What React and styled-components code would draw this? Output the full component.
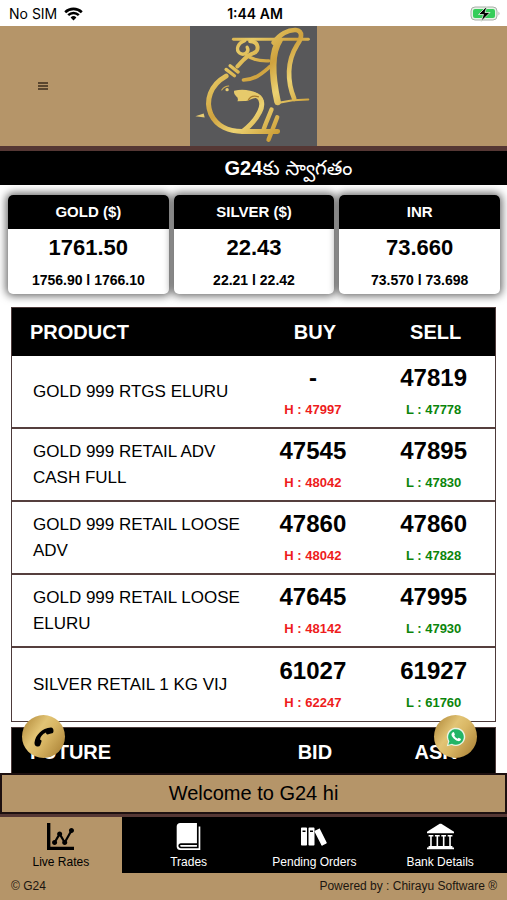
import React from "react";
import styled, { createGlobalStyle } from "styled-components";
import { ImStatsDots, ImBook, ImBooks, ImLibrary } from "react-icons/im";

const GlobalStyle = createGlobalStyle`
  * {
    box-sizing: border-box;
  }

  body {
    margin: 0;
    background: #fff;
    color: #000;
    font-family: "Liberation Sans", Arial, sans-serif;
  }
`;

const Screen = styled.div`
  display: flex;
  flex-direction: column;
  height: 100vh;
`;

const StatusBar = styled.div`
  display: grid;
  grid-template-columns: 1fr auto 1fr;
  align-items: center;
  flex: none;
  height: 26px;
  padding: 2px 6px 0 9px;
  font-family: Inter, sans-serif;
  font-size: 14px;
  line-height: 20px;
`;

const Carrier = styled.span`
  display: flex;
  align-items: center;
  gap: 7px;
`;

const Clock = styled.span`
  font-weight: 600;
`;

const BatteryIcon = styled.svg`
  justify-self: end;
`;

const Header = styled.header`
  display: grid;
  grid-template-columns: 1fr auto 1fr;
  align-items: center;
  flex: none;
  background: #b59569;
  border-bottom: 5px solid #553734;
`;

const MenuButton = styled.button`
  justify-self: start;
  display: flex;
  margin-left: 28px;
  padding: 10px;
  border: 0;
  background: none;
`;

const Logo = styled.svg`
  display: block;
  width: 127px;
  height: 120px;
  background: #58585a;
`;

const Greeting = styled.div`
  flex: none;
  height: 34px;
  padding-left: 70px;
  background: #000;
  color: #fff;
  font-family: "Liberation Sans", "Noto Sans Telugu", "Noto Sans", sans-serif;
  font-size: 20px;
  line-height: 35px;
  text-align: center;
`;

const Content = styled.main`
  flex: 1;
  min-height: 0;
  overflow-y: auto;
  scrollbar-width: none;
`;

const Cards = styled.section`
  display: grid;
  grid-template-columns: repeat(3, 1fr);
  gap: 5px;
  padding: 10px 7px 13px 8px;
`;

const Card = styled.article`
  overflow: hidden;
  border-radius: 5px;
  background: #fff;
  box-shadow: 0 0 8px 2px rgba(0, 0, 0, 0.6);
  font-weight: bold;
  text-align: center;
`;

const CardTitle = styled.h2`
  margin: 0;
  background: #000;
  color: #fff;
  font-size: 15px;
  line-height: 34px;
`;

const CardPrice = styled.div`
  font-size: 22px;
  line-height: 38px;
`;

const CardRange = styled.div`
  padding-bottom: 1px;
  font-size: 14px;
  line-height: 26px;
`;

const RateTable = styled.table`
  width: calc(100% - 22px);
  margin: 0 11px 5px;
  border: 1px solid #4d3a3a;
  border-collapse: separate;
  border-spacing: 0;
  table-layout: fixed;
`;

const HeadCell = styled.th`
  width: ${props => (props.$wide ? "50%" : "25%")};
  height: 48px;
  padding: 0 0 0 ${props => (props.$wide ? "18px" : "2px")};
  background: #000;
  color: #fff;
  font-size: 20px;
  text-align: ${props => (props.$wide ? "left" : "center")};
`;

const Row = styled.tr`
  &:not(:last-child) > * {
    border-bottom: 2px solid #553f3d;
  }
`;

const NameCell = styled.th`
  height: 73px;
  padding: 0 8px 0 21px;
  font-size: 17px;
  font-weight: normal;
  line-height: 26px;
  text-align: left;
`;

const RateCell = styled.td`
  padding: 0 2px 2px 0;
  font-weight: bold;
  text-align: center;
`;

const Rate = styled.div`
  font-size: 24px;
  line-height: 32px;
`;

const Limit = styled.div`
  padding-top: 6px;
  color: ${props => (props.$low ? "#0b850b" : "#ee1c1c")};
  font-size: 13px;
  line-height: 20px;
`;

const Bottom = styled.div`
  position: relative;
  flex: none;
`;

const RoundLink = styled.a`
  position: absolute;
  bottom: calc(100% + 15px);
  ${props => props.$side}: ${props => (props.$side === "left" ? "22px" : "30px")};
  display: flex;
  align-items: center;
  justify-content: center;
  width: 43px;
  height: 43px;
  border-radius: 50%;
  background: linear-gradient(125deg, #b28a3b 5%, #e2c475 38%, #d9b765 55%, #a98035 95%);
`;

const Ticker = styled.div`
  height: 41px;
  border: 2px solid #1d1010;
  background: #b59569;
  font-size: 20px;
  line-height: 36px;
  text-align: center;
`;

const Nav = styled.nav`
  display: grid;
  grid-template-columns: repeat(4, 1fr);
  padding-right: 4px;
  border-top: 3px solid #553734;
  background: #000;
`;

const NavLink = styled.a`
  display: flex;
  flex-direction: column;
  align-items: center;
  gap: 4px;
  height: 56px;
  margin-right: ${props => (props.$active ? "4px" : "0")};
  padding-top: 6px;
  background: ${props => (props.$active ? "#b59569" : "#000")};
  color: ${props => (props.$active ? "#000" : "#fff")};
  font-size: 12px;
  line-height: 16px;
  text-decoration: none;
`;

const Footer = styled.footer`
  display: flex;
  justify-content: space-between;
  padding: 0 10px 0 11px;
  background: #b59569;
  color: #1c1510;
  font-size: 12px;
  line-height: 27px;
`;

const cards = [
  { title: "GOLD ($)", price: "1761.50", low: "1756.90", high: "1766.10" },
  { title: "SILVER ($)", price: "22.43", low: "22.21", high: "22.42" },
  { title: "INR", price: "73.660", low: "73.570", high: "73.698" }
];

const products = [
  { name: "GOLD 999 RTGS ELURU", buy: "-", sell: "47819", high: "47997", low: "47778" },
  { name: "GOLD 999 RETAIL ADV CASH FULL", buy: "47545", sell: "47895", high: "48042", low: "47830" },
  { name: "GOLD 999 RETAIL LOOSE ADV", buy: "47860", sell: "47860", high: "48042", low: "47828" },
  { name: "GOLD 999 RETAIL LOOSE ELURU", buy: "47645", sell: "47995", high: "48142", low: "47930" },
  { name: "SILVER RETAIL 1 KG VIJ", buy: "61027", sell: "61927", high: "62247", low: "61760" }
];

const links = [
  { label: "Live Rates", Icon: ImStatsDots, active: true },
  { label: "Trades", Icon: ImBook },
  { label: "Pending Orders", Icon: ImBooks },
  { label: "Bank Details", Icon: ImLibrary }
];

const WifiIcon = () => (
  <svg width="19" height="14" viewBox="0 0 19 14" fill="none" stroke="#000">
    <path d="M1.2 5.2a12 12 0 0 1 16.6 0" strokeWidth="2.6" />
    <path d="M4.2 8.2a7.6 7.6 0 0 1 10.6 0" strokeWidth="2.5" />
    <path d="M9.5 13.6 6.6 10.5a4.2 4.2 0 0 1 5.8 0z" fill="#000" stroke="none" />
  </svg>
);

const Battery = () => (
  <BatteryIcon width="31" height="16" viewBox="0 0 31 16">
    <rect x="1" y="1" width="26" height="13" rx="4" fill="#e4f3e4" stroke="#a9aea9" />
    <rect x="3" y="3" width="22" height="9" rx="2" fill="#35cd59" />
    <path d="M28.5 5.5q2 2 0 4z" fill="#a9aea9" />
    <path d="M17 0 8.500 8.500h5L11 15.500l9-9h-5z" fill="#000" stroke="#e4f3e4" strokeWidth="0.8" />
  </BatteryIcon>
);

const BrandLogo = () => (
  <Logo viewBox="32 18 380 362" preserveAspectRatio="none" role="img" aria-label="G24">
    <defs>
      <linearGradient id="gold" gradientUnits="userSpaceOnUse" x1="80" y1="60" x2="330" y2="330">
        <stop offset="0" stopColor="#cfa03c" />
        <stop offset="0.25" stopColor="#e6c965" />
        <stop offset="0.5" stopColor="#cfa23e" />
        <stop offset="0.7" stopColor="#ecd272" />
        <stop offset="1" stopColor="#c8972f" />
      </linearGradient>
    </defs>
    <g fill="none" stroke="url(#gold)" strokeLinecap="round" strokeLinejoin="round">
      <path d="M162 58H386" strokeWidth="9" />
      <path d="M196 62C174 70 168 90 181 100C194 109 211 96 203 82" strokeWidth="10" />
      <path d="M212 64C238 64 241 94 222 100C204 105 192 120 174 140" strokeWidth="12" />
      <path d="M202 107C222 122 244 124 268 123" strokeWidth="10" />
      <path d="M192 181C228 180 248 160 272 140" strokeWidth="11" />
      <path d="M282 68C300 42 326 29 348 30C372 33 366 56 352 76C322 124 322 184 344 238" strokeWidth="14" />
      <path d="M300 60C274 100 278 174 294 247" strokeWidth="20" />
      <path d="M294 250Q340 240 386 240" strokeWidth="6" />
      <path d="M140 149 165 168M152 138 176 157" strokeWidth="10" />
      <path d="M140 169C92 196 78 243 94 283C112 321 150 338 196 336" strokeWidth="15" />
      <path d="M127 211Q136 199 148 199" strokeWidth="3" />
      <path d="M226 226C248 232 252 256 240 278C228 303 208 322 190 336H294" strokeWidth="15" />
      <path d="M276 270C266 296 256 316 252 332M293 293 267 361" strokeWidth="13" />
    </g>
    <path
      d="M164 213Q188 207 212 213Q242 218 254 246Q232 228 213 240Q205 246 194 244L174 245Q178 235 170 230Q162 224 164 213Z"
      fill="#e6ca6b"
    />
    <path d="M206 243Q214 224 238 232" fill="none" stroke="#a67a2c" strokeWidth="4" />
    <path d="M48 290 73 282 76 294Z" fill="#e7cc73" />
    <circle cx="143" cy="210" r="5" fill="#e7cc73" />
  </Logo>
);

const PhoneIcon = () => (
  <svg width="20" height="20" viewBox="0 0 20 20">
    <path
      d="M0.500 15.500C1.500 8 8 1.200 17 0.500Q19.500 0.500 19.500 4Q19.500 6.500 17 6.500L13.500 7.500Q12 7.500 12 5.500C8.500 7 6.500 9.500 6 12.500Q8 13 7.500 14.500L6.300 18Q5.500 20 3 19.500Q0.300 19 0.500 15.500Z"
      fill="#000"
    />
  </svg>
);

const WhatsAppIcon = () => (
  <svg width="20" height="20" viewBox="0 0 20 20">
    <path d="M0.800 19.200 2.100 14.500A9.200 9.200 0 1 1 5.600 17.900Z" fill="#e9f4e5" />
    <path d="M2.300 17.700 3.400 14.200A7.800 7.800 0 1 1 6 16.700Z" fill="#22b566" />
    <path
      d="M6.500 5.500Q7.700 4.600 8.200 5.800L8.900 7.500Q8.800 8.100 8.200 8.700Q9.200 10.800 11.600 11.800L12.700 10.700L15 11.900Q15 13.900 12.900 14.200Q10.300 14.200 7.700 11.600Q5 8.800 5.400 7Z"
      fill="#fff"
    />
  </svg>
);

const RateHead = ({ titles }) => (
  <thead>
    <tr>
      {titles.map((title, i) => (
        <HeadCell key={title} scope="col" $wide={i === 0}>
          {title}
        </HeadCell>
      ))}
    </tr>
  </thead>
);

const App = () => {
  return (
    <Screen>
      <GlobalStyle />
      <StatusBar>
        <Carrier>
          No SIM <WifiIcon />
        </Carrier>
        <Clock>1:44 AM</Clock>
        <Battery />
      </StatusBar>
      <Header>
        <MenuButton aria-label="Menu">
          <svg width="10" height="8" viewBox="0 0 10 8" stroke="#3b2d1c" strokeWidth="1.4">
            <path d="M0 1h10M0 4h10M0 7h10" />
          </svg>
        </MenuButton>
        <BrandLogo />
      </Header>
      <Greeting lang="te">
        <b>G24</b>కు స్వాగతం
      </Greeting>
      <Content>
        <Cards>
          {cards.map(card => (
            <Card key={card.title}>
              <CardTitle>{card.title}</CardTitle>
              <CardPrice>{card.price}</CardPrice>
              <CardRange>
                {card.low} l {card.high}
              </CardRange>
            </Card>
          ))}
        </Cards>
        <RateTable>
          <RateHead titles={["PRODUCT", "BUY", "SELL"]} />
          <tbody>
            {products.map(item => (
              <Row key={item.name}>
                <NameCell scope="row">{item.name}</NameCell>
                <RateCell>
                  <Rate>{item.buy}</Rate>
                  <Limit>H : {item.high}</Limit>
                </RateCell>
                <RateCell>
                  <Rate>{item.sell}</Rate>
                  <Limit $low>L : {item.low}</Limit>
                </RateCell>
              </Row>
            ))}
          </tbody>
        </RateTable>
        <RateTable>
          <RateHead titles={["FUTURE", "BID", "ASK"]} />
        </RateTable>
      </Content>
      <Bottom>
        <RoundLink href="#call" $side="left" aria-label="Call">
          <PhoneIcon />
        </RoundLink>
        <RoundLink href="#whatsapp" $side="right" aria-label="WhatsApp">
          <WhatsAppIcon />
        </RoundLink>
        <Ticker>Welcome to G24 hi</Ticker>
        <Nav>
          {links.map(({ label, Icon, active }) => (
            <NavLink key={label} href="#" $active={active}>
              <Icon size={27} />
              {label}
            </NavLink>
          ))}
        </Nav>
        <Footer>
          <span>© G24</span>
          <span>Powered by : Chirayu Software ®</span>
        </Footer>
      </Bottom>
    </Screen>
  );
};

export default App;
